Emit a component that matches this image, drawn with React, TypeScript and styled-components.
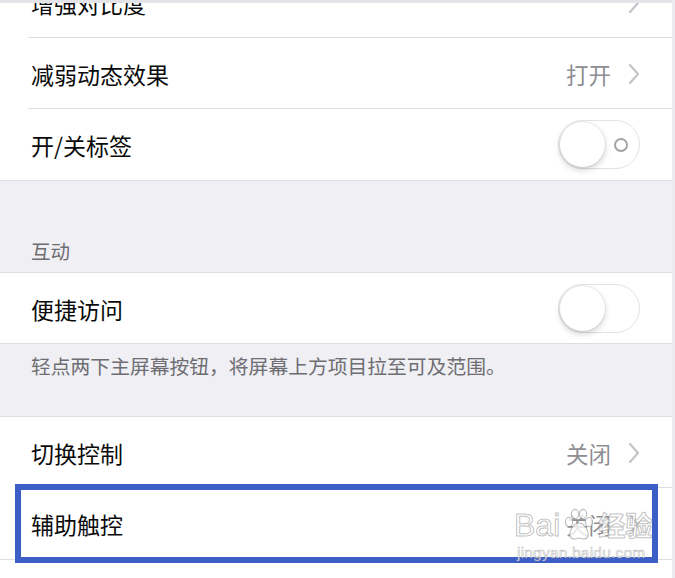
import React from "react";
import styled, { createGlobalStyle } from "styled-components";

const Global = createGlobalStyle`
  html, body { margin: 0; padding: 0; background: #ffffff; }
  body { font-family: "Noto Sans CJK SC", "Noto Sans", sans-serif; }
`;

const Page = styled.div`
  position: relative;
  width: 675px;
  height: 578px;
  overflow: hidden;
  background: #ffffff;
  box-sizing: border-box;
  border-right: 3px solid #ececf0;
`;

const TopEdge = styled.div`
  position: absolute;
  top: 0;
  left: 0;
  right: 0;
  height: 3px;
  background: #e4e4e8;
  z-index: 3;
`;

const Group = styled.div<{ $first?: boolean }>`
  background: #ffffff;
  margin-top: ${(p) => (p.$first ? "-33px" : "0")};
  border-bottom: 1px solid #dedee2;
`;

const Row = styled.div<{ $sep?: boolean; $tall?: number }>`
  position: relative;
  box-sizing: border-box;
  height: ${(p) => p.$tall ?? 71}px;
  display: flex;
  align-items: center;
  padding: 0 32px 0 31px;
  &::after {
    content: "";
    display: ${(p) => (p.$sep ? "block" : "none")};
    position: absolute;
    left: 28px;
    right: 0;
    bottom: 0;
    height: 1px;
    background: #dedee2;
  }
`;

const Label = styled.span`
  flex: 1;
  font-size: 23px;
  color: #0a0a0a;
  line-height: 30px;
  padding-top: 1px;
`;

const Value = styled.span`
  font-size: 22.5px;
  color: #8e8e93;
  margin-right: 17px;
  line-height: 30px;
  padding-top: 1px;
`;

const SectionGap = styled.div`
  height: 92px;
  box-sizing: border-box;
  background: #efeff4;
  display: flex;
  align-items: flex-end;
  padding: 0 0 8px 31px;
  border-bottom: 1px solid #dedee2;
`;

const SectionTitle = styled.span`
  font-size: 19.5px;
  line-height: 26px;
  color: #6d6d72;
`;

const Footer = styled.div`
  height: 73px;
  box-sizing: border-box;
  background: #efeff4;
  padding: 9px 0 0 31px;
  border-bottom: 1px solid #dedee2;
`;

const FooterText = styled.span`
  font-size: 19.8px;
  line-height: 26px;
  color: #6d6d72;
`;

const Track = styled.div`
  width: 82px;
  height: 49px;
  box-sizing: border-box;
  border-radius: 25px;
  border: 1.5px solid #e2e2e6;
  background: #ffffff;
  display: flex;
  align-items: center;
  padding: 0 0 0 0.5px;
`;

const Knob = styled.div`
  width: 45px;
  height: 45px;
  border-radius: 50%;
  background: #ffffff;
  box-shadow: 0 3px 6px rgba(0, 0, 0, 0.18), 0 0 0 1px rgba(0, 0, 0, 0.06);
`;

const OffMark = styled.div`
  width: 14px;
  height: 14px;
  box-sizing: border-box;
  border-radius: 50%;
  border: 2px solid #a4a4a8;
  margin-left: auto;
  margin-right: 11px;
`;

const Highlight = styled.div`
  position: relative;
`;

const Frame = styled.div`
  position: absolute;
  top: -4px;
  bottom: -4px;
  left: 15px;
  right: 14px;
  border: 6px solid #3c5ec6;
  pointer-events: none;
  z-index: 2;
`;

const Watermark = styled.div`
  position: absolute;
  left: 514px;
  top: 508px;
  z-index: 4;
  display: flex;
  flex-direction: column;
  align-items: flex-start;
`;

const MarkTop = styled.div`
  display: flex;
  align-items: flex-end;
  font-family: "Liberation Sans", "Noto Sans CJK SC", sans-serif;
  font-size: 32px;
  line-height: 34px;
  color: rgba(255, 255, 255, 0.75);
  -webkit-text-stroke: 1px rgba(140, 140, 140, 0.55);
`;

const MarkCjk = styled.span`
  font-family: "Noto Sans CJK SC", sans-serif;
  font-size: 27px;
  font-weight: 700;
  margin-left: 1px;
`;

const MarkUrl = styled.div`
  font-family: "Liberation Sans", sans-serif;
  font-size: 15.5px;
  line-height: 16px;
  margin-top: 3px;
  margin-left: 3px;
  color: rgba(255, 255, 255, 0.8);
  -webkit-text-stroke: 0.6px rgba(140, 140, 140, 0.6);
  letter-spacing: 0.2px;
`;

const Chevron = () => (
  <svg width="12" height="22" viewBox="0 0 12 22">
    <polyline
      points="2,2 10,11 2,20"
      fill="none"
      stroke="#c4c4c9"
      strokeWidth="2.2"
      strokeLinecap="round"
      strokeLinejoin="round"
    />
  </svg>
);

const Paw = () => (
  <svg width="34" height="34" viewBox="0 0 34 34" style={{ margin: "0 1px 0 2px" }}>
    <g fill="rgba(255,255,255,0.8)" stroke="rgba(140,140,140,0.55)" strokeWidth="1.2">
      <ellipse cx="7" cy="14" rx="3.6" ry="4.6" />
      <ellipse cx="13" cy="6" rx="3.6" ry="4.6" />
      <ellipse cx="21" cy="6" rx="3.6" ry="4.6" />
      <ellipse cx="27" cy="14" rx="3.6" ry="4.6" />
      <path d="M17 15 C11 15 7 24 8 28 C9 32 14 31 17 30 C20 31 25 32 26 28 C27 24 23 15 17 15 Z" />
    </g>
  </svg>
);

const Toggle = ({ mark }: { mark?: boolean }) => (
  <Track>
    <Knob />
    {mark && <OffMark />}
  </Track>
);

export default function App() {
  return (
    <>
      <Global />
      <Page>
        <TopEdge />
        <Group $first>
          <Row $sep>
            <Label>增强对比度</Label>
            <Chevron />
          </Row>
          <Row $sep>
            <Label>减弱动态效果</Label>
            <Value>打开</Value>
            <Chevron />
          </Row>
          <Row>
            <Label>开/关标签</Label>
            <Toggle mark />
          </Row>
        </Group>
        <SectionGap>
          <SectionTitle>互动</SectionTitle>
        </SectionGap>
        <Group>
          <Row $tall={70}>
            <Label>便捷访问</Label>
            <Toggle />
          </Row>
        </Group>
        <Footer>
          <FooterText>轻点两下主屏幕按钮，将屏幕上方项目拉至可及范围。</FooterText>
        </Footer>
        <Group>
          <Row $sep>
            <Label>切换控制</Label>
            <Value>关闭</Value>
            <Chevron />
          </Row>
          <Highlight>
            <Row>
              <Label>辅助触控</Label>
              <Value>关闭</Value>
              <Chevron />
            </Row>
            <Frame />
          </Highlight>
        </Group>
        <Watermark>
          <MarkTop>
            Bai
            <Paw />
            <MarkCjk>经验</MarkCjk>
          </MarkTop>
          <MarkUrl>jingyan.baidu.com</MarkUrl>
        </Watermark>
      </Page>
    </>
  );
}
